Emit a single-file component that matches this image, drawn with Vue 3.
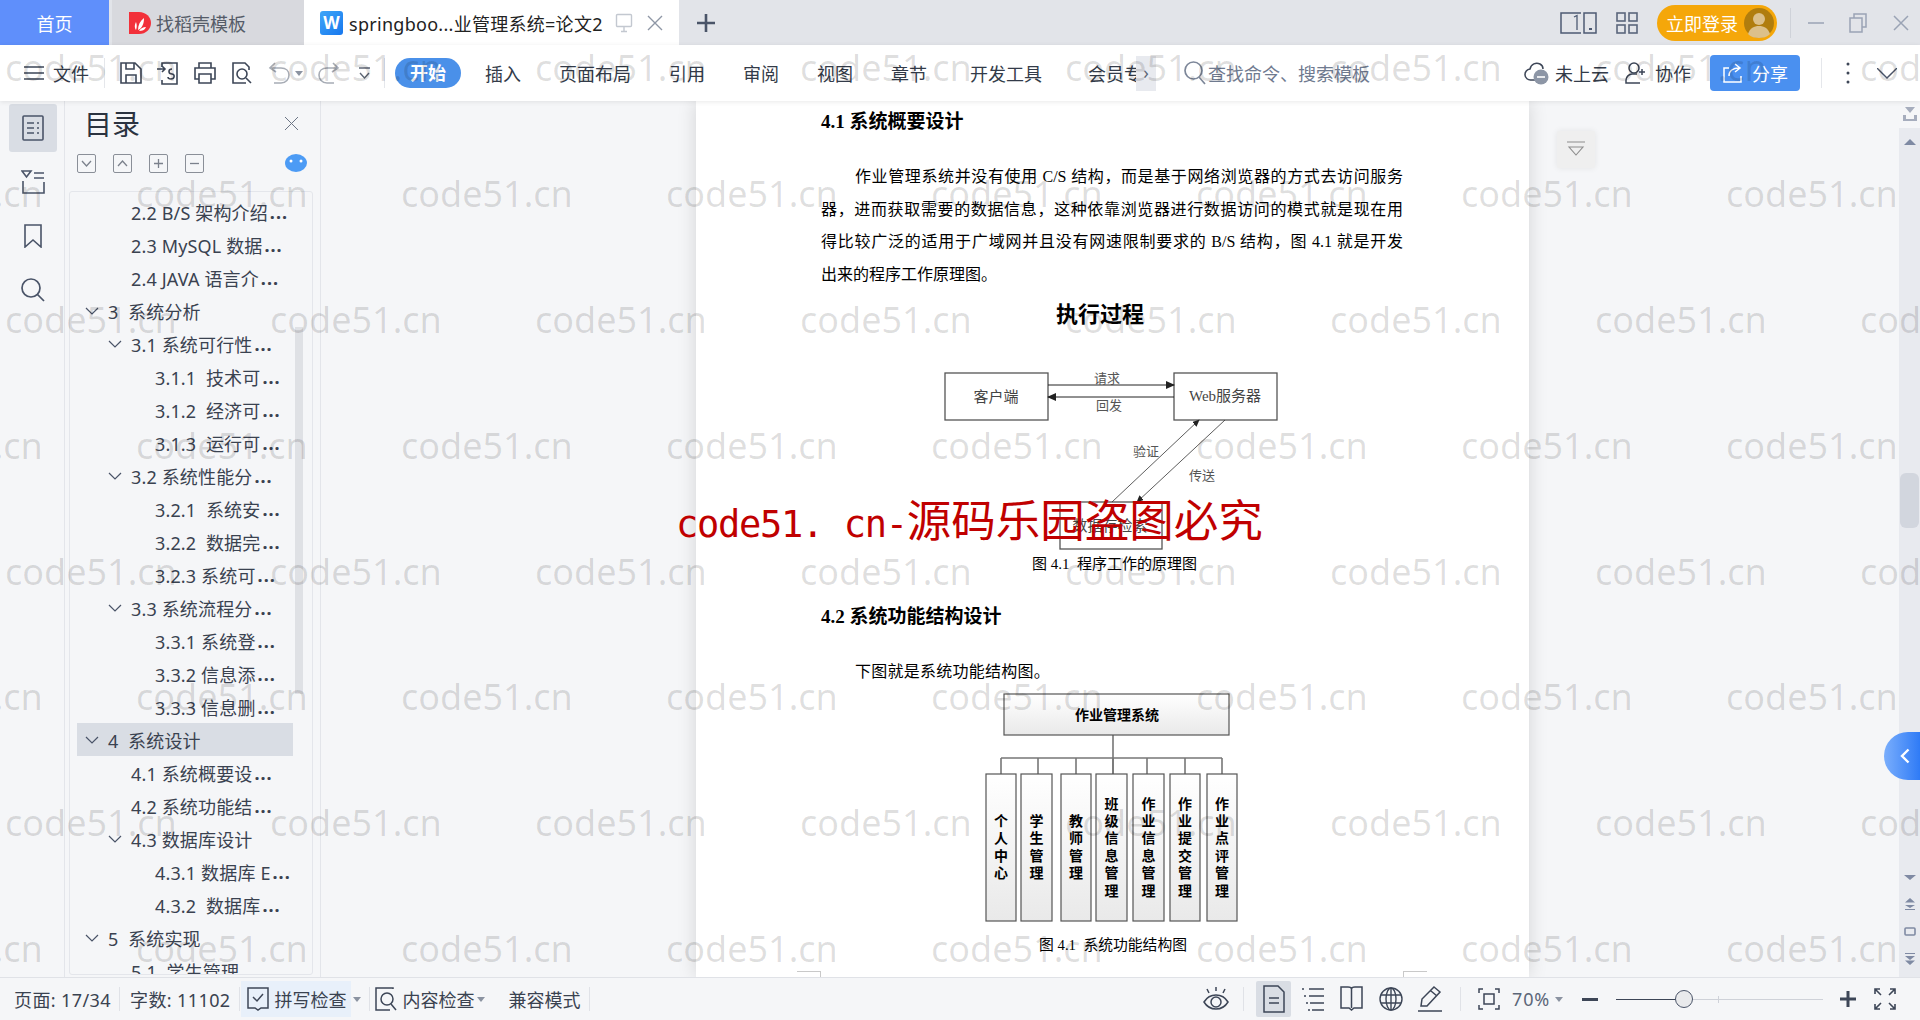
<script setup>
const toc = [
  { t: "2.2 B/S 架构介绍...", lv: 1 },
  { t: "2.3 MySQL 数据...", lv: 1 },
  { t: "2.4 JAVA 语言介...", lv: 1 },
  { t: "3  系统分析", lv: 0, open: true },
  { t: "3.1 系统可行性...", lv: 1, open: true },
  { t: "3.1.1  技术可...", lv: 2 },
  { t: "3.1.2  经济可...", lv: 2 },
  { t: "3.1.3  运行可...", lv: 2 },
  { t: "3.2 系统性能分...", lv: 1, open: true },
  { t: "3.2.1  系统安...", lv: 2 },
  { t: "3.2.2  数据完...", lv: 2 },
  { t: "3.2.3 系统可...", lv: 2 },
  { t: "3.3 系统流程分...", lv: 1, open: true },
  { t: "3.3.1 系统登...", lv: 2 },
  { t: "3.3.2 信息添...", lv: 2 },
  { t: "3.3.3 信息删...", lv: 2 },
  { t: "4  系统设计", lv: 0, open: true, active: true },
  { t: "4.1 系统概要设...", lv: 1 },
  { t: "4.2 系统功能结...", lv: 1 },
  { t: "4.3 数据库设计", lv: 1, open: true },
  { t: "4.3.1 数据库 E...", lv: 2 },
  { t: "4.3.2  数据库...", lv: 2 },
  { t: "5  系统实现", lv: 0, open: true },
  { t: "5.1  学生管理", lv: 1 },
];

const menus = ["插入", "页面布局", "引用", "审阅", "视图", "章节", "开发工具"];

const modules = [
  { x: 986, w: 30, t: "个人中心" },
  { x: 1021, w: 31, t: "学生管理" },
  { x: 1061, w: 30, t: "教师管理" },
  { x: 1096, w: 31, t: "班级信息管理" },
  { x: 1133, w: 31, t: "作业信息管理" },
  { x: 1170, w: 30, t: "作业提交管理" },
  { x: 1207, w: 30, t: "作业点评管理" },
];
const drops = [1001, 1038, 1076, 1113, 1147, 1185, 1222];

function charY(text, i) {
  return 847 + (i - (text.length - 1) / 2) * 17.4;
}
</script>

<template>
  <div class="app">
    <!-- 标签栏 -->
    <header class="titlebar">
      <div class="tab tab-home">首页</div>
      <div class="tab tab-tpl">
        <svg width="22" height="24" viewBox="0 0 22 24">
          <path d="M0 1h10c7 0 12 5 12 11s-5 11-12 11H0z" fill="#f2303a" />
          <path d="M7 19c-2-3-1-6 0-8 1 3 1 5 0 8zM9 19c0-5 2-9 6-12 0 6-2 10-6 12zM10 20c2-3 4-4 7-4-1 3-4 4-7 4z" fill="#fff" />
        </svg>
        <span>找稻壳模板</span>
      </div>
      <div class="tab tab-doc">
        <span class="wps-logo">W</span>
        <span class="doc-name">springboo...业管理系统=论文2</span>
        <svg class="tab-pin" width="18" height="20" viewBox="0 0 18 20" fill="none" stroke="#c3c8d0" stroke-width="1.4">
          <rect x="1.5" y="1.5" width="15" height="12" rx="1" />
          <path d="M9 14v4M6 18.5h6" />
        </svg>
        <svg class="tab-x" width="16" height="16" viewBox="0 0 16 16" fill="none" stroke="#8f97a6" stroke-width="1.4">
          <path d="M1 1l14 14M15 1L1 15" />
        </svg>
      </div>
      <svg class="tab-plus" width="18" height="18" viewBox="0 0 18 18" fill="none" stroke="#4a5468" stroke-width="2.6">
        <path d="M9 0v18M0 9h18" />
      </svg>
      <div class="title-right">
        <svg width="37" height="22" viewBox="0 0 37 22" fill="none" stroke="#4d5a73" stroke-width="1.5">
          <path d="M21 1H1v20h20M24 1h12v20H24z" />
          <path d="M14 5l3-1.500V18" stroke-width="1.3" />
          <path d="M29 17h3" stroke-width="2" />
        </svg>
        <svg class="ti-grid" width="22" height="22" viewBox="0 0 22 22" fill="none" stroke="#5b667c" stroke-width="1.6">
          <rect x="1" y="1" width="8" height="8" /><rect x="13" y="1" width="8" height="8" />
          <rect x="1" y="13" width="8" height="8" /><rect x="13" y="13" width="8" height="8" />
        </svg>
        <div class="login">
          <span>立即登录</span>
          <svg width="30" height="30" viewBox="0 0 30 30">
            <circle cx="15" cy="15" r="15" fill="#b07d0e" />
            <circle cx="15" cy="11" r="6" fill="#dcc08a" />
            <path d="M4 26c2-6 6-8 11-8s9 2 11 8c-3 3-7 4-11 4s-8-1-11-4z" fill="#dcc08a" />
          </svg>
        </div>
        <i class="title-sep"></i>
        <svg class="win win-min" width="16" height="2" viewBox="0 0 16 2"><path d="M0 1h16" stroke="#9aa3b5" stroke-width="1.5" /></svg>
        <svg class="win win-max" width="18" height="20" viewBox="0 0 18 20" fill="none" stroke="#9aa3b5" stroke-width="1.5">
          <rect x="1" y="5" width="12" height="14" /><path d="M5 5V1h12v13h-4" />
        </svg>
        <svg class="win win-close" width="16" height="16" viewBox="0 0 16 16" fill="none" stroke="#9aa3b5" stroke-width="1.5">
          <path d="M1 1l14 14M15 1L1 15" />
        </svg>
      </div>
    </header>

    <!-- 工具栏 -->
    <nav class="toolbar">
      <svg class="tb-burger" width="20" height="14" viewBox="0 0 20 14" stroke="#3d4657" stroke-width="1.5">
        <path d="M0 1h20M0 7h20M0 13h20" />
      </svg>
      <span class="tb-file">文件</span>
      <i class="tb-sep sep-a"></i>
      <div class="tb-icons">
        <svg width="24" height="24" viewBox="0 0 24 24" fill="none" stroke="#3d4657" stroke-width="1.6">
          <path d="M2 2h14l6 6v14H2z" /><path d="M7 2v6h8V2M7 22v-8h10v8" />
        </svg>
        <svg width="24" height="24" viewBox="0 0 24 24" fill="none" stroke="#3d4657" stroke-width="1.6">
          <path d="M6 6V2h15v21H6v-4" /><path d="M1 8h8M6 5l3 3-3 3" /><path d="M16 8c-4 0-4 5 0 5 3 0 3 5-1 5-2 0-3-1-3-2" />
        </svg>
        <svg width="24" height="24" viewBox="0 0 24 24" fill="none" stroke="#3d4657" stroke-width="1.6">
          <path d="M6 7V2h12v5M6 18H2V7h20v11h-4" /><path d="M6 13h12v9H6z" />
        </svg>
        <svg width="24" height="24" viewBox="0 0 24 24" fill="none" stroke="#3d4657" stroke-width="1.6">
          <path d="M19 9V6l-4-4H3v20h13" /><circle cx="12" cy="13" r="5" /><path d="M16 17l5 5" />
        </svg>
      </div>
      <svg class="tb-undo" width="24" height="22" viewBox="0 0 24 22" fill="none" stroke="#a7acb5" stroke-width="1.6">
        <path d="M7 1L2 6l6 4M2 6h11c5 0 8 3 8 7s-3 8-8 8H6" />
      </svg>
      <i class="caret tb-caret1"></i>
      <svg class="tb-redo" width="22" height="22" viewBox="0 0 22 22" fill="none" stroke="#a7acb5" stroke-width="1.6">
        <path d="M15 1l5 5-6 4M20 6H9C4 6 1 9 1 13s3 8 8 8h7" />
      </svg>
      <svg class="tb-more" width="11" height="13" viewBox="0 0 11 13" fill="none" stroke="#5d6675" stroke-width="1.4">
        <path d="M0 1h11M1 6l4.500 5L10 6" />
      </svg>
      <i class="tb-sep sep-b"></i>
      <span class="start">开始</span>
      <div class="menus">
        <span v-for="m in menus" :key="m">{{ m }}</span>
      </div>
      <div class="vip">
        <span class="vip-clip">会员专享</span>
        <span class="vip-more">›</span>
      </div>
      <div class="search">
        <svg width="22" height="24" viewBox="0 0 22 24" fill="none" stroke="#7d8799" stroke-width="1.7">
          <circle cx="9.500" cy="9.500" r="8.500" /><path d="M15 16l6 7" />
        </svg>
        <span>查找命令、搜索模板</span>
      </div>
      <div class="tb-right">
        <svg width="25" height="24" viewBox="0 0 25 24">
          <path d="M11 19H7a5.500 5.500 0 0 1-1-11C7 3 12 1 16 3c2 1 3 3 3 5" fill="none" stroke="#3d4657" stroke-width="1.5" />
          <circle cx="17" cy="16" r="7.500" fill="#8d96a6" /><path d="M13 16h8" stroke="#fff" stroke-width="1.6" />
        </svg>
        <span class="cloud-txt">未上云</span>
        <svg class="ti-co" width="22" height="22" viewBox="0 0 22 22" fill="none" stroke="#3d4657" stroke-width="1.5">
          <circle cx="9" cy="6" r="5" /><path d="M12 12H7c-3 0-6 3-6 6v3h14" /><path d="M17 7v6M14 10h6" />
        </svg>
        <span class="co-txt">协作</span>
        <div class="share">
          <svg width="20" height="20" viewBox="0 0 20 20" fill="none" stroke="#fff" stroke-width="1.500">
            <path d="M6 5H1v14h17v-6" /><path d="M6 13c0-5 4-8 10-8M12 1l5 4-5 4" />
          </svg>
          <span>分享</span>
        </div>
        <i class="tb-sep sep-c"></i>
        <svg class="ti-kebab" width="4" height="22" viewBox="0 0 4 22" fill="#3d4657">
          <circle cx="2" cy="2" r="1.500" /><circle cx="2" cy="11" r="1.500" /><circle cx="2" cy="20" r="1.500" />
        </svg>
        <svg class="ti-fold" width="20" height="11" viewBox="0 0 20 11" fill="none" stroke="#4a5468" stroke-width="1.4">
          <path d="M0 0l10 10L20 0" />
        </svg>
      </div>
    </nav>

    <main class="main">
      <!-- 左侧竖栏 -->
      <aside class="rail">
        <div class="rail-btn active">
          <svg width="22" height="26" viewBox="0 0 22 26" fill="none" stroke="#4a5468" stroke-width="1.6">
            <rect x="1" y="1" width="20" height="24" rx="1" />
            <path d="M5 8h7M15 8h2M5 13h7M15 13h2M5 18h7M15 18h2" />
          </svg>
        </div>
        <div class="rail-btn">
          <svg width="24" height="24" viewBox="0 0 24 24" fill="none" stroke="#4a5468" stroke-width="1.6">
            <path d="M1 1h9L5.500 7zM13 3h10M13 8h10M2 11v12h21V12" />
          </svg>
        </div>
        <div class="rail-btn">
          <svg width="18" height="24" viewBox="0 0 18 24" fill="none" stroke="#4a5468" stroke-width="1.6">
            <path d="M1 1h16v22l-8-7-8 7z" />
          </svg>
        </div>
        <div class="rail-btn">
          <svg width="24" height="24" viewBox="0 0 24 24" fill="none" stroke="#4a5468" stroke-width="1.7">
            <circle cx="10" cy="10" r="9" /><path d="M16 16l7 7" />
          </svg>
        </div>
      </aside>

      <!-- 目录 -->
      <section class="sidebar">
        <div class="side-head">
          <span class="side-title">目录</span>
          <svg width="13" height="13" viewBox="0 0 13 13" stroke="#6c7585" stroke-width="1"><path d="M0 0l13 13M13 0L0 13" /></svg>
        </div>
        <div class="side-tools">
          <span class="mini"><svg width="11" height="7" viewBox="0 0 11 7" fill="none" stroke="#7b818c" stroke-width="1.3"><path d="M1 1l4.500 5L10 1" /></svg></span>
          <span class="mini"><svg width="11" height="7" viewBox="0 0 11 7" fill="none" stroke="#7b818c" stroke-width="1.3"><path d="M1 6l4.500-5L10 6" /></svg></span>
          <span class="mini"><svg width="9" height="9" viewBox="0 0 9 9" stroke="#7b818c" stroke-width="1.3"><path d="M0 4.500h9M4.500 0v9" /></svg></span>
          <span class="mini"><svg width="9" height="9" viewBox="0 0 9 9" stroke="#7b818c" stroke-width="1.3"><path d="M0 4.500h9" /></svg></span>
          <svg class="blob" width="22" height="18" viewBox="0 0 22 18">
            <ellipse cx="11" cy="9" rx="11" ry="9" fill="#4c9bf5" />
            <circle cx="6" cy="7" r="1.500" fill="#fff" /><circle cx="16" cy="7" r="1.500" fill="#fff" />
          </svg>
        </div>
        <div class="toc">
          <div
            v-for="row in toc"
            :key="row.t"
            class="toc-row"
            :class="['lv' + row.lv, { active: row.active }]"
          >
            <svg v-if="row.open" class="toc-arrow" width="14" height="8" viewBox="0 0 14 8" fill="none" stroke="#4a5468" stroke-width="1.2">
              <path d="M1 1l6 6 6-6" />
            </svg>
            <span v-else class="toc-arrow"></span>
            <span class="toc-text">{{ row.t.replace("...", "") }}</span>
            <span v-if="row.t.endsWith('...')" class="toc-more">...</span>
          </div>
          <i class="toc-thumb"></i>
        </div>
      </section>

      <!-- 文档区 -->
      <section class="canvas">
        <article class="page">
          <h2 class="h-first">4.1 系统概要设计</h2>
          <div class="para">
            <p class="just first">作业管理系统并没有使用 C/S 结构，而是基于网络浏览器的方式去访问服务</p>
            <p class="just">器，进而获取需要的数据信息，这种依靠浏览器进行数据访问的模式就是现在用</p>
            <p class="just">得比较广泛的适用于广域网并且没有网速限制要求的 B/S 结构，图 4.1 就是开发</p>
            <p>出来的程序工作原理图。</p>
          </div>
          <h3 class="fig-title">执行过程</h3>
          <svg class="fig fig-a" width="582" height="222" viewBox="821 331 582 222">
            <defs>
              <marker id="ah" markerWidth="9" markerHeight="8" refX="8" refY="4" orient="auto">
                <path d="M0 0l9 4-9 4z" fill="#222" />
              </marker>
            </defs>
            <rect x="945" y="373" width="103" height="47" class="f-box" />
            <rect x="1174" y="373" width="103" height="47" class="f-box" />
            <rect x="1060" y="502" width="102" height="47" class="f-box" />
            <path d="M1048 385h126" class="f-line" marker-end="url(#ah)" />
            <path d="M1174 397h-126" class="f-line" marker-end="url(#ah)" />
            <path d="M1112 502l87-82" class="f-thin" marker-end="url(#ah)" />
            <path d="M1225 420l-88 82" class="f-thin" marker-end="url(#ah)" />
            <text x="996" y="402" class="f-t big">客户端</text>
            <text x="1225" y="401" class="f-t big">Web服务器</text>
            <text x="1107" y="383" class="f-t">请求</text>
            <text x="1109" y="410" class="f-t">回发</text>
            <text x="1146" y="456" class="f-t">验证</text>
            <text x="1202" y="480" class="f-t">传送</text>
            <text x="1110" y="531" class="f-t big">数据存检索</text>
          </svg>
          <p class="caption cap-a">图 4.1&nbsp;&nbsp;程序工作的原理图</p>
          <h2 class="h-second">4.2 系统功能结构设计</h2>
          <p class="lead">下图就是系统功能结构图。</p>
          <svg class="fig fig-b" width="582" height="232" viewBox="821 692 582 232">
            <defs>
              <linearGradient id="bg" x1="0" y1="0" x2="0" y2="1">
                <stop offset="0" stop-color="#fff" /><stop offset="1" stop-color="#e9e9e9" />
              </linearGradient>
            </defs>
            <path d="M1113 735v39M1001 758h221" class="s-line" />
            <path v-for="x in drops" :key="x" :d="'M' + x + ' 758v16'" class="s-line" />
            <rect x="1004" y="694" width="225" height="41" fill="url(#bg)" class="s-box" />
            <text x="1117" y="720" class="s-t">作业管理系统</text>
            <g v-for="m in modules" :key="m.x">
              <rect :x="m.x" y="774" :width="m.w" height="147" fill="url(#bg)" class="s-box" />
              <text
                v-for="(ch, i) in m.t"
                :key="i"
                :x="m.x + m.w / 2"
                :y="charY(m.t, i) + 5"
                class="s-t"
              >{{ ch }}</text>
            </g>
          </svg>
          <p class="caption cap-b">图 4.1&nbsp;&nbsp;系统功能结构图</p>
          <div class="crops">
            <i class="crop crop-l"></i>
            <i class="crop crop-r"></i>
          </div>
        </article>
        <div class="fold-btn">
          <svg width="20" height="18" viewBox="0 0 20 18" fill="none" stroke="#8d8d8d" stroke-width="1.1">
            <path d="M1 1h18M3 6h14l-7 8z" />
          </svg>
        </div>
      </section>

      <!-- 滚动条 -->
      <aside class="vbar">
        <div class="vbar-top">
          <svg width="16" height="15" viewBox="0 0 16 15" fill="#a6adbd">
            <path d="M3 0h10L8 6zM1 8h3v4h8V8h3v6H1z" />
          </svg>
        </div>
        <div class="vbar-track">
          <i class="arrow-up"></i>
          <i class="thumb"></i>
          <i class="arrow-down"></i>
          <svg width="12" height="12" viewBox="0 0 12 12" fill="#7f8aa3"><path d="M6 0l5 4.500H1zM1 7h10l-5 3z" /><path d="M1 11h10v1H1z" /></svg>
          <svg class="v-sq" width="12" height="9" viewBox="0 0 12 9" fill="none" stroke="#7f8aa3" stroke-width="1.600"><rect x="1" y="1" width="10" height="7" rx="1" /></svg>
          <svg class="v-dn" width="12" height="12" viewBox="0 0 12 12" fill="#7f8aa3"><path d="M1 0h10v1H1zM1 3h10L6 7zM6 12l-5-4.500h10z" /></svg>
        </div>
        <div class="blue-tab">
          <svg width="10" height="16" viewBox="0 0 10 16" fill="none" stroke="#fff" stroke-width="2.400"><path d="M8.500 1.500L2 8l6.500 6.500" /></svg>
        </div>
      </aside>
    </main>

    <!-- 状态栏 -->
    <footer class="status">
      <span class="st-page">页面: 17/34</span>
      <i class="st-sep"></i>
      <span class="st-count">字数: 11102</span>
      <i class="st-sep"></i>
      <div class="st-tile">
        <svg width="22" height="24" viewBox="0 0 22 24" fill="none" stroke="#3d4657" stroke-width="1.500">
          <path d="M1 1h20v20h-7l-3 2-3-2H1z" /><path d="M6 10l4 4 6-7" />
        </svg>
        <span>拼写检查</span>
      </div>
      <i class="caret st-caret"></i>
      <i class="st-sep st-sep-b"></i>
      <div class="st-check">
        <svg width="22" height="24" viewBox="0 0 22 24" fill="none" stroke="#3d4657" stroke-width="1.500">
          <path d="M18 2V1H1v22h14" /><circle cx="12" cy="12" r="6" /><path d="M16 17l5 6" />
        </svg>
        <span>内容检查</span>
      </div>
      <i class="caret st-caret"></i>
      <span class="st-compat">兼容模式</span>
      <i class="st-sep st-sep-c"></i>

      <div class="st-right">
        <svg width="26" height="26" viewBox="0 0 26 26" fill="none" stroke="#3d4657" stroke-width="1.500">
          <path d="M1 16c3-5 7-7 12-7s9 2 12 7c-3 5-7 7-12 7s-9-2-12-7z" /><circle cx="13" cy="16" r="5" />
          <path d="M13 1v4M4 3l2 4M22 3l-2 4" />
        </svg>
        <i class="st-sep sr-a"></i>
        <div class="view-tile">
          <svg width="22" height="28" viewBox="0 0 22 28" fill="none" stroke="#3d4657" stroke-width="1.500">
            <path d="M1 1h14l6 6v20H1z" /><path d="M6 13h10M6 18h10" />
          </svg>
        </div>
        <svg class="sr-list" width="22" height="24" viewBox="0 0 22 24" fill="none" stroke="#3d4657" stroke-width="1.500">
          <path d="M0 2h2M7 2h15M2 9h2M7 9h15M4 16h2M8 16h14M6 23h2M10 23h12" />
        </svg>
        <svg class="sr-book" width="23" height="26" viewBox="0 0 23 26" fill="none" stroke="#3d4657" stroke-width="1.500">
          <path d="M1 1h7c2 0 3.500 1 3.500 2 0-1 1.500-2 3.500-2h7v21h-8l-2.500 2-2.500-2H1zM11.500 3v19" />
        </svg>
        <svg class="sr-globe" width="24" height="24" viewBox="0 0 24 24" fill="none" stroke="#3d4657" stroke-width="1.400">
          <circle cx="12" cy="12" r="11" /><ellipse cx="12" cy="12" rx="5" ry="11" /><path d="M12 1v22M2 8h20M2 16h20" />
        </svg>
        <svg class="sr-pen" width="24" height="26" viewBox="0 0 24 26" fill="none" stroke="#3d4657" stroke-width="1.500">
          <path d="M16 1l6 5-13 14H3l1-7zM13 5l6 5M0 25h24" />
        </svg>
        <i class="st-sep sr-b"></i>
        <svg class="sr-focus" width="22" height="22" viewBox="0 0 22 22" fill="none" stroke="#3d4657" stroke-width="1.500">
          <path d="M1 5V1h4M17 1h4v4M21 17v4h-4M5 21H1v-4" /><rect x="6" y="6" width="10" height="10" />
        </svg>
        <span class="zoom-val">70%</span>
        <i class="caret zoom-caret"></i>
        <i class="z-minus"></i>
        <div class="slider">
          <i class="slider-fill"></i>
          <i class="slider-tick"></i>
          <i class="slider-knob"></i>
        </div>
        <svg class="z-plus" width="16" height="16" viewBox="0 0 16 16" stroke="#3d4657" stroke-width="3"><path d="M0 8h16M8 0v16" /></svg>
        <svg class="sr-full" width="22" height="22" viewBox="0 0 22 22" fill="none" stroke="#3d4657" stroke-width="1.600">
          <path d="M1 6V1h5M1 1l6 6M16 1h5v5M21 1l-6 6M21 16v5h-5M21 21l-6-6M6 21H1v-5M1 21l6-6" />
        </svg>
      </div>
    </footer>

    <!-- 水印 -->
    <div class="wm">
      <div v-for="r in 8" :key="r" class="wm-row" :class="{ odd: r % 2 === 0 }">
        <span v-for="c in 9" :key="c">code51.cn</span>
      </div>
    </div>
    <div class="stamp"><span class="stamp-latin">code51. cn-</span>源码乐园盗图必究</div>
  </div>
</template>

<style>
html,
body {
  margin: 0;
  overflow: hidden;
  background: #f5f6f8;
}
</style>

<style scoped>
.app {
  position: relative;
  width: 1920px;
  height: 1020px;
  display: flex;
  flex-direction: column;
  overflow: hidden;
  font-family: "Noto Sans", "Noto Sans CJK SC", sans-serif;
  font-size: 18px;
  color: #333b49;
}
svg {
  display: block;
  flex: none;
}
i {
  display: block;
  flex: none;
}

/* 标签栏 */
.titlebar {
  height: 45px;
  flex: none;
  display: flex;
  align-items: center;
  background: #e2e4e9;
}
.tab {
  height: 45px;
  display: flex;
  align-items: center;
  box-sizing: border-box;
}
.tab-home {
  width: 109px;
  justify-content: center;
  background: #5f8ffb;
  color: #fff;
}
.tab-tpl {
  width: 192px;
  margin-left: 3px;
  padding-left: 17px;
  gap: 5px;
  background: #d8d9de;
  color: #555c68;
}
.tab-doc {
  width: 375px;
  padding-left: 16px;
  background: #fff;
  color: #222;
}
.wps-logo {
  width: 23px;
  height: 24px;
  flex: none;
  border-radius: 3px;
  background: linear-gradient(135deg, #3ea6f8, #1777ee);
  color: #fff;
  font-weight: 700;
  font-size: 17px;
  line-height: 24px;
  text-align: center;
}
.doc-name {
  margin-left: 6px;
  white-space: nowrap;
  letter-spacing: 0.28px;
}
.tab-pin {
  margin-left: 12px;
}
.tab-x {
  margin-left: 14px;
}
.tab-plus {
  margin-left: 18px;
}
.title-right {
  margin-left: auto;
  display: flex;
  align-items: center;
}
.ti-grid {
  margin-left: 19px;
}
.login {
  width: 120px;
  height: 36px;
  margin-left: 19px;
  padding: 0 3px 0 9px;
  box-sizing: border-box;
  display: flex;
  align-items: center;
  justify-content: space-between;
  border-radius: 18px;
  background: #f5a70a;
  color: #fff;
}
.title-sep {
  width: 1px;
  height: 30px;
  margin-left: 13px;
  background: #cfd2d9;
}
.win-min {
  margin-left: 17px;
}
.win-max {
  margin-left: 25px;
}
.win-close {
  margin: 0 11px 0 26px;
}

/* 工具栏 */
.toolbar {
  position: relative;
  z-index: 2;
  height: 56px;
  flex: none;
  display: flex;
  align-items: center;
  padding-left: 24px;
  background: #fff;
  box-shadow: 0 1px 5px rgba(0, 0, 0, 0.09);
  white-space: nowrap;
}
.tb-file {
  margin-left: 9px;
}
.tb-sep {
  width: 1px;
  height: 30px;
  background: #e5e7eb;
}
.sep-a {
  margin-left: 15px;
}
.tb-icons {
  display: flex;
  gap: 13px;
  margin-left: 14px;
}
.tb-undo {
  margin-left: 14px;
}
.caret {
  width: 0;
  height: 0;
  border: 4px solid transparent;
  border-top: 5px solid #8b93a1;
  border-bottom: 0;
}
.tb-caret1 {
  margin-left: 3px;
}
.tb-redo {
  margin-left: 15px;
}
.tb-more {
  margin-left: 19px;
}
.sep-b {
  margin-left: 14px;
}
.start {
  width: 66px;
  height: 30px;
  margin-left: 10px;
  border-radius: 15px;
  background: #4a90e9;
  color: #fff;
  font-weight: 700;
  text-align: center;
  line-height: 30px;
}
.menus {
  display: flex;
  gap: 38px;
  margin-left: 24px;
}
.menus span:last-child {
  margin-left: 5px;
}
.vip {
  display: flex;
  align-items: center;
  margin-left: 46px;
}
.vip-clip {
  width: 48px;
  overflow: hidden;
}
.vip-more {
  width: 20px;
  height: 35px;
  background: #e8eaef;
  color: #5d6675;
  text-align: center;
  line-height: 33px;
}
.search {
  display: flex;
  align-items: center;
  margin-left: 28px;
  gap: 2px;
  color: #6f7a8f;
}
.tb-right {
  margin-left: auto;
  display: flex;
  align-items: center;
}
.cloud-txt {
  margin-left: 6px;
}
.ti-co {
  margin-left: 16px;
}
.co-txt {
  margin-left: 8px;
}
.share {
  width: 90px;
  height: 36px;
  margin-left: 19px;
  padding-left: 13px;
  box-sizing: border-box;
  display: flex;
  align-items: center;
  gap: 9px;
  border-radius: 4px;
  background: #4a90f0;
  color: #fff;
}
.sep-c {
  margin-left: 21px;
}
.ti-kebab {
  margin-left: 24px;
}
.ti-fold {
  margin: 0 23px 0 27px;
}

/* 主体 */
.main {
  position: relative;
  flex: 1;
  min-height: 0;
  display: flex;
  background: #f5f6f8;
}
.rail {
  width: 65px;
  flex: none;
  box-sizing: border-box;
  padding: 3px 0 0 9px;
  display: flex;
  flex-direction: column;
  gap: 6px;
  border-right: 1px solid #e3e5ea;
}
.rail-btn {
  width: 48px;
  height: 48px;
  display: flex;
  align-items: center;
  justify-content: center;
  border-radius: 3px;
}
.rail-btn.active {
  background: #d9dde4;
}
.sidebar {
  width: 256px;
  flex: none;
  box-sizing: border-box;
  padding: 0 7px 2px 4px;
  display: flex;
  flex-direction: column;
  border-right: 1px solid #e3e5ea;
}
.side-head {
  height: 48px;
  flex: none;
  display: flex;
  align-items: center;
  justify-content: space-between;
  padding: 0 15px 4px 15px;
  box-sizing: border-box;
}
.side-title {
  font-size: 28px;
  color: #2b3340;
}
.side-tools {
  height: 42px;
  flex: none;
  display: flex;
  align-items: flex-start;
  gap: 17px;
  padding: 5px 0 0 8px;
  box-sizing: border-box;
}
.mini {
  width: 19px;
  height: 19px;
  box-sizing: border-box;
  display: flex;
  align-items: center;
  justify-content: center;
  border: 1.5px solid #8a8f98;
  border-radius: 2px;
}
.blob {
  margin-left: 64px;
}
.toc {
  position: relative;
  flex: 1;
  min-height: 0;
  overflow: hidden;
  box-sizing: border-box;
  padding: 3px 0 0 7px;
  border: 1px solid #e4e6eb;
  border-radius: 3px;
}
.toc-row {
  width: 216px;
  height: 33px;
  display: flex;
  align-items: center;
  box-sizing: border-box;
  white-space: pre;
  color: #3a4250;
}
.toc-row.active {
  background: #d9dde4;
}
.lv0 {
  padding-left: 8px;
}
.lv1 {
  padding-left: 31px;
}
.lv2 {
  padding-left: 55px;
}
.toc-text {
  letter-spacing: 0.15px;
}
.toc-more {
  margin-left: 2px;
  font-weight: 700;
  letter-spacing: 1px;
}
.toc-arrow {
  width: 14px;
  height: 8px;
  flex: none;
  margin-right: 9px;
}
.toc-thumb {
  position: absolute;
  top: 135px;
  left: 225px;
  width: 8px;
  height: 367px;
  background: #dfe1e5;
}

/* 文档 */
.canvas {
  flex: 1;
  min-width: 0;
  display: flex;
  align-items: flex-start;
  padding-left: 375px;
  overflow: hidden;
}
.page {
  width: 833px;
  height: 876px;
  flex: none;
  box-sizing: border-box;
  padding: 5px 0 0 125px;
  background: #fff;
  box-shadow: 0 0 18px rgba(0, 0, 0, 0.14);
  color: #000;
  font-family: "Liberation Serif", "Noto Sans CJK SC", serif;
  font-size: 16px;
}
h2,
p,
h3 {
  margin: 0;
}
.h-first,
.h-second {
  height: 32px;
  font-size: 19px;
  line-height: 32px;
  font-weight: 700;
}
.para {
  width: 582px;
  margin-top: 23px;
  line-height: 32.5px;
}
.just {
  text-align: justify;
  text-align-last: justify;
}
.first {
  text-indent: 34px;
}
.fig-title {
  width: 582px;
  margin-top: 8px;
  padding-left: 235px;
  box-sizing: border-box;
  font-size: 22px;
  line-height: 32px;
  font-weight: 700;
}
.fig-a {
  margin-top: 0;
}
.caption {
  font-size: 15px;
  line-height: 20px;
}
.cap-a {
  margin: 1px 0 0 211px;
}
.h-second {
  margin-top: 27px;
}
.lead {
  margin-top: 23px;
  padding-left: 34px;
  line-height: 32px;
  letter-spacing: 0.25px;
}
.fig-b {
  margin-top: 4px;
}
.cap-b {
  margin: 11px 0 0 218px;
  font-size: 14.8px;
}
.crops {
  width: 630px;
  margin: 16px 0 0 -24px;
  display: flex;
  justify-content: space-between;
}
.crop {
  width: 24px;
  height: 6px;
  box-sizing: border-box;
  border-top: 1px solid #c9c9c9;
}
.crop-l {
  border-right: 1px solid #c9c9c9;
}
.crop-r {
  border-left: 1px solid #c9c9c9;
}
.f-box {
  fill: #fff;
  stroke: #555;
  stroke-width: 1.3;
}
.f-line {
  stroke: #222;
  stroke-width: 1;
  fill: none;
}
.f-thin {
  stroke: #333;
  stroke-width: 0.8;
  fill: none;
}
.f-t {
  font-size: 13px;
  fill: #555;
  text-anchor: middle;
}
.f-t.big {
  font-size: 15px;
  fill: #444;
}
.s-line {
  stroke: #777;
  stroke-width: 1.6;
  fill: none;
}
.s-box {
  stroke: #555;
  stroke-width: 1.2;
}
.s-t {
  font-size: 14px;
  font-weight: 700;
  fill: #000;
  text-anchor: middle;
}
.fold-btn {
  width: 38px;
  height: 37px;
  flex: none;
  margin: 30px 0 0 28px;
  display: flex;
  align-items: center;
  justify-content: center;
  border-radius: 2px;
  background: #efefef;
  box-shadow: 0 0 6px rgba(0, 0, 0, 0.08);
}

/* 滚动条 */
.vbar {
  position: relative;
  width: 21px;
  flex: none;
  display: flex;
  flex-direction: column;
}
.vbar-top {
  height: 27px;
  flex: none;
  display: flex;
  align-items: center;
  justify-content: center;
}
.vbar-track {
  flex: 1;
  display: flex;
  flex-direction: column;
  align-items: center;
  background: #e8eaef;
}
.arrow-up {
  margin-top: 11px;
  width: 0;
  height: 0;
  border: 6px solid transparent;
  border-bottom: 6px solid #7f8aa3;
  border-top: 0;
}
.thumb {
  width: 19px;
  height: 55px;
  margin-top: 328px;
  border-radius: 6px;
  background: #d2d6de;
}
.arrow-down {
  margin-top: 347px;
  margin-bottom: 18px;
  width: 0;
  height: 0;
  border: 6px solid transparent;
  border-top: 5px solid #7f8aa3;
  border-bottom: 0;
}
.v-sq {
  margin-top: 17px;
}
.v-dn {
  margin-top: 17px;
}
.blue-tab {
  position: absolute;
  top: 631px;
  right: 0;
  width: 36px;
  height: 48px;
  padding-left: 16px;
  box-sizing: border-box;
  display: flex;
  align-items: center;
  border-radius: 24px 0 0 24px;
  background: linear-gradient(90deg, #7aaefc, #2f7bf6);
}

/* 状态栏 */
.status {
  height: 43px;
  flex: none;
  box-sizing: border-box;
  display: flex;
  align-items: center;
  padding-left: 14px;
  background: #f5f6f8;
  border-top: 1px solid #e0e2e7;
  color: #3a4250;
  white-space: nowrap;
}
.st-page,
.st-count {
  letter-spacing: 0.4px;
}
.st-sep {
  width: 1px;
  height: 24px;
  background: #e0e2e7;
  margin-left: 8px;
}
.st-count {
  margin-left: 10px;
}
.st-tile {
  width: 110px;
  height: 36px;
  margin-left: 1px;
  padding-left: 6px;
  box-sizing: border-box;
  display: flex;
  align-items: center;
  gap: 6px;
  background: #e8f0fa;
}
.st-caret {
  margin-left: 2px;
}
.st-sep-b {
  margin-left: 8px;
}
.st-check {
  display: flex;
  align-items: center;
  gap: 6px;
  margin-left: 5px;
}
.st-compat {
  margin-left: 24px;
}
.st-right {
  margin-left: auto;
  display: flex;
  align-items: center;
}
.sr-a {
  margin-left: 14px;
}
.view-tile {
  width: 35px;
  height: 36px;
  margin-left: 12px;
  display: flex;
  align-items: center;
  justify-content: center;
  border-radius: 2px;
  background: #d9dde4;
}
.sr-list {
  margin-left: 11px;
}
.sr-book {
  margin-left: 16px;
}
.sr-globe {
  margin-left: 16px;
}
.sr-pen {
  margin-left: 15px;
}
.sr-b {
  margin-left: 18px;
}
.sr-focus {
  margin-left: 17px;
}
.zoom-val {
  margin-left: 12px;
  color: #5c6678;
  letter-spacing: 0.8px;
}
.zoom-caret {
  margin-left: 5px;
}
.z-minus {
  width: 16px;
  height: 3px;
  margin-left: 19px;
  background: #3d4657;
}
.slider {
  position: relative;
  width: 207px;
  height: 1px;
  margin-left: 18px;
  background: #cfd2d9;
}
.slider-fill {
  width: 68px;
  height: 1px;
  background: #3d4657;
}
.slider-tick {
  position: absolute;
  left: 102px;
  top: -3px;
  width: 1px;
  height: 7px;
  background: #cfd2d9;
}
.slider-knob {
  position: absolute;
  left: 59px;
  top: -9px;
  width: 18px;
  height: 18px;
  box-sizing: border-box;
  border: 1.5px solid #4a5468;
  border-radius: 50%;
  background: #e9eaec;
}
.z-plus {
  margin-left: 17px;
}
.sr-full {
  margin: 0 24px 0 18px;
}

/* 水印 */
.wm {
  position: absolute;
  inset: 0;
  z-index: 5;
  padding-top: 5px;
  overflow: hidden;
  pointer-events: none;
  color: rgba(0, 0, 0, 0.13);
  font-size: 36px;
  white-space: nowrap;
}
.wm-row {
  height: 125.8px;
  display: flex;
  align-items: center;
  padding-left: 5px;
}
.wm-row.odd {
  margin-left: -134px;
}
.wm-row span {
  width: 265px;
  flex: none;
}
.stamp {
  position: absolute;
  z-index: 6;
  left: 676px;
  top: 488px;
  color: #c00000;
  font-size: 44.5px;
  line-height: 64px;
  white-space: nowrap;
  pointer-events: none;
}
.stamp-latin {
  font-family: "DejaVu Sans Mono", monospace;
  font-size: 37px;
  letter-spacing: -1.3px;
}
</style>
